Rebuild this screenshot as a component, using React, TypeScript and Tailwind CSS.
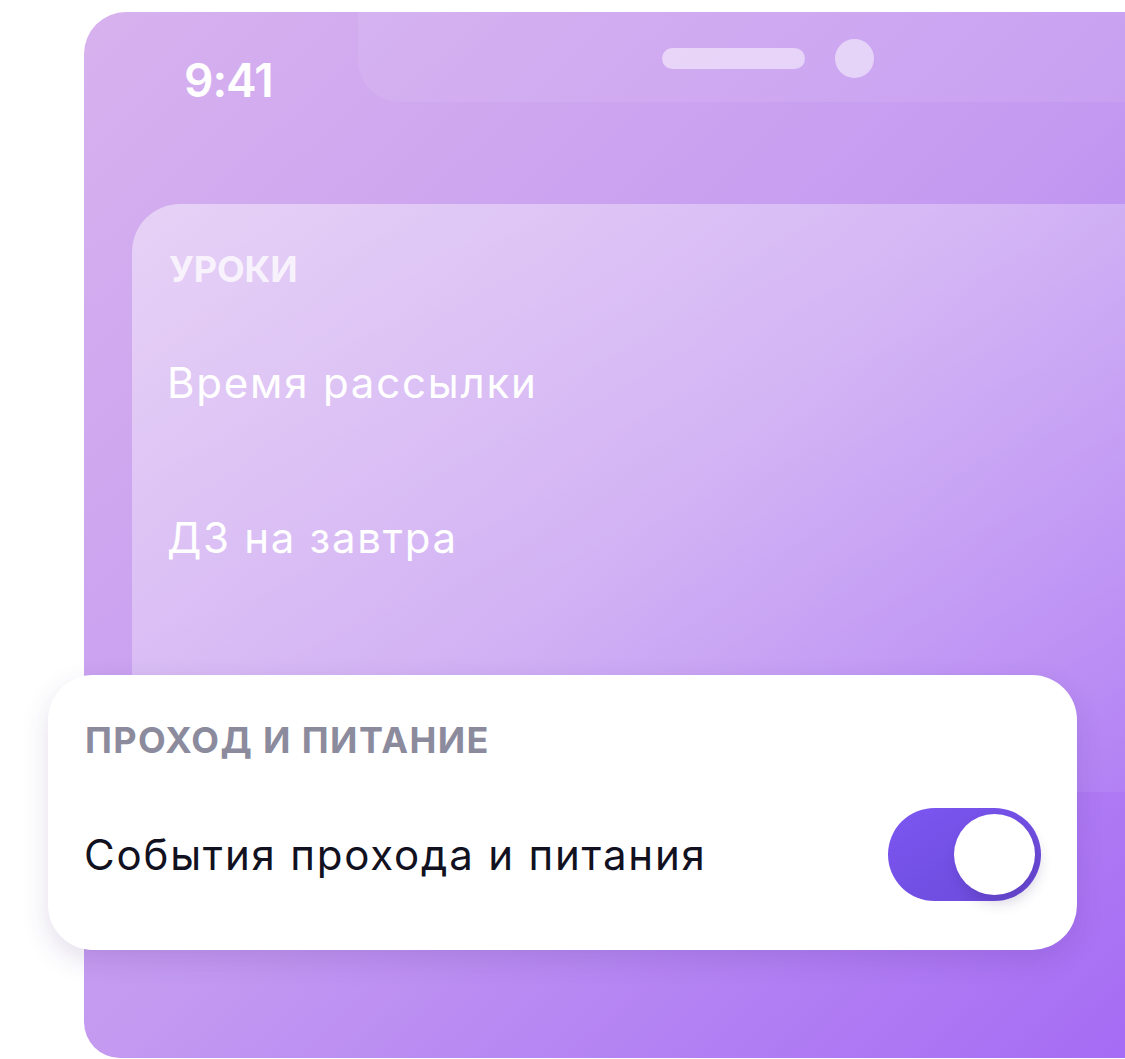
import React from 'react';

const font = { fontFamily: 'Inter, "Noto Sans", sans-serif' };

const Toggle = () => (
  <div className="relative w-[153px] h-[93px] shrink-0 rounded-full bg-gradient-to-br from-[#7c56f1] to-[#6a4ad9] p-[6px] flex justify-end">
    <div className="w-[81px] h-[81px] rounded-full bg-white shadow-[4px_8px_14px_rgba(40,20,90,0.18)]"></div>
  </div>
);

const App = () => {
  return (
    <div className="w-[1125px] h-[1059px] overflow-hidden bg-white" style={font}>
      {/* Phone frame */}
      <div className="ml-[84px] mt-[12px] w-[1100px] h-[1046px] rounded-tl-[42px] rounded-bl-[36px] bg-gradient-to-br from-[#d7b2ee] via-[#c49af1] to-[#a468f4] flex flex-col">
        {/* Status bar */}
        <div className="flex h-[90px]">
          <div className="w-[274px] shrink-0 pl-[100px] pt-[45px]">
            <span className="block text-[46px] leading-none font-semibold text-white tracking-[-1px]">9:41</span>
          </div>
          <div className="flex-1 rounded-bl-[42px] bg-white/[0.07] flex items-start pl-[304px] pt-[27px] gap-[30px]">
            <div className="mt-[9px] w-[143px] h-[21px] rounded-full bg-white/50"></div>
            <div className="w-[39px] h-[39px] rounded-full bg-white/50"></div>
          </div>
        </div>

        {/* Lessons card */}
        <div className="ml-[48px] mt-[102px] h-[588px] rounded-tl-[48px] bg-gradient-to-br from-white/45 via-white/25 to-white/5 pl-[37px] pt-[47px]">
          <div className="text-[36px] leading-none font-bold text-white/75 tracking-[-0.2px]">УРОКИ</div>
          <div className="mt-[75px] -ml-[2px] text-[42px] leading-none text-white tracking-[1.8px]">Время рассылки</div>
          <div className="mt-[113px] -ml-[2px] text-[42px] leading-none text-white tracking-[1.7px]">ДЗ на завтра</div>
        </div>

        {/* Access & meals card */}
        <div className="relative -mt-[117px] -ml-[36px] w-[1029px] h-[275px] rounded-[45px] bg-white shadow-[0_10px_28px_rgba(60,30,110,0.14)] pl-[37px] pr-[36px] pt-[47px]">
          <div className="text-[36px] leading-none font-bold text-[#8b8b9d] tracking-[1.4px]">ПРОХОД И ПИТАНИЕ</div>
          <div className="mt-[50px] flex items-center justify-between h-[93px]">
            <span className="-ml-[1px] text-[42px] leading-none text-[#11111f] tracking-[1.8px]">События прохода и питания</span>
            <Toggle />
          </div>
        </div>
      </div>
    </div>
  );
};

export default App;
